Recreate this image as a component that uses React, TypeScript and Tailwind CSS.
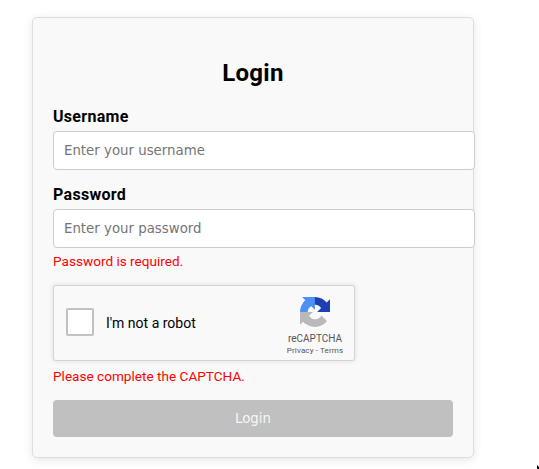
function RecaptchaLogo() {
  return (
    <svg viewBox="0 0 64 64" className="block size-[30px]" aria-hidden="true">
      <path fill="#1c3fb5" d="M64 31.955l-.033-1.37V4.687l-7.16 7.16C50.948 4.674 42.033.093 32.05.093c-10.4 0-19.622 4.96-25.458 12.64l11.736 11.86a15.55 15.55 0 0 1 4.754-5.334c2.05-1.6 4.952-2.906 8.968-2.906.485 0 .86.057 1.135.163 4.976.393 9.288 3.14 11.828 7.124l-8.307 8.307L64 31.953" />
      <path fill="#4a90f5" d="M31.862.094l-1.37.033H4.594l7.16 7.16C4.58 13.147 0 22.06 0 32.046c0 10.4 4.96 19.622 12.64 25.458L24.5 45.768a15.55 15.55 0 0 1-5.334-4.754c-1.6-2.05-2.906-4.952-2.906-8.968 0-.485.057-.86.163-1.135.393-4.976 3.14-9.288 7.124-11.828l8.307 8.307L31.86.095" />
      <path fill="#b9b9b9" d="M.001 32.045l.033 1.37v25.898l7.16-7.16c5.86 7.173 14.774 11.754 24.76 11.754 10.4 0 19.622-4.96 25.458-12.64l-11.736-11.86a15.55 15.55 0 0 1-4.754 5.334c-2.05 1.6-4.952 2.906-8.968 2.906-.485 0-.86-.057-1.135-.163-4.976-.393-9.288-3.14-11.828-7.124l8.307-8.307c-10.522.04-22.4.066-27.295-.005" />
    </svg>
  );
}

function Field({ label, type, placeholder }: { label: string; type: string; placeholder: string }) {
  return (
    <label className="block">
      <span className="block text-[16px] leading-5 font-bold tracking-[0.3px]">{label}</span>
      <input
        type={type}
        placeholder={placeholder}
        className="mt-1 block h-[39px] w-[422px] rounded-[4px] border border-[#ccc] bg-white px-[10px] font-['DejaVu_Sans',sans-serif] text-[13.333px] placeholder:text-[#757575] outline-none"
      />
    </label>
  );
}

export default function App() {
  return (
    <main className="relative h-[469px] w-[539px] overflow-hidden bg-white pt-[17px] pl-8 font-['Roboto',sans-serif] text-black">
      <form className="h-[441px] w-[442px] rounded-[5px] border border-[#ddd] bg-[#f9f9f9] px-5 pt-[41px] shadow-[0_2px_10px_rgba(0,0,0,0.1)]">
        <h2 className="text-center text-[24px] leading-[28px] font-bold tracking-[0.3px]">Login</h2>
        <div className="mt-5">
          <Field label="Username" type="text" placeholder="Enter your username" />
        </div>
        <div className="mt-[15px]">
          <Field label="Password" type="password" placeholder="Enter your password" />
        </div>
        <p className="mt-[5px] text-[13.6px] leading-4 text-[#f00]">Password is required.</p>
        <div className="mt-4 flex h-[76px] w-[302px] items-center rounded-[3px] border border-[#d3d3d3] bg-[#f9f9f9] pl-3 shadow-[0_0_4px_1px_rgba(0,0,0,0.08)]">
          <span className="mb-[2px] size-7 rounded-[2px] border-2 border-[#c1c1c1] bg-white" />
          <span className="ml-3 text-[14px] leading-[17px]">I'm not a robot</span>
          <div className="mt-[6px] ml-auto flex w-[78px] flex-col items-center text-[#555]">
            <RecaptchaLogo />
            <span className="mt-[6px] text-[10px] leading-[12px]">reCAPTCHA</span>
            <span className="mt-[1px] text-[8px] leading-[10px] tracking-[0.13px] whitespace-pre">Privacy - Terms</span>
          </div>
        </div>
        <p className="mt-[7px] text-[13.6px] leading-4 text-[#f00]">Please complete the CAPTCHA.</p>
        <button
          type="button"
          className="mt-4 block h-[37px] w-[400px] rounded-[4px] bg-[#c0c0c0] font-['DejaVu_Sans',sans-serif] text-[13.333px] text-[#f7f7f7]"
        >
          Login
        </button>
      </form>
      <svg viewBox="0 0 2 4" className="absolute right-0 bottom-0 h-1 w-[2px]" aria-hidden="true">
        <path d="M0 0L2 2V4H0Z" fill="#000" />
      </svg>
    </main>
  );
}
